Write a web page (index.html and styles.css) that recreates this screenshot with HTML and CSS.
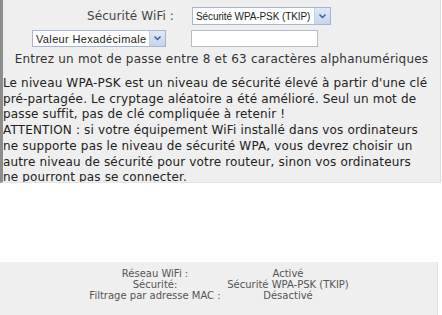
FILE: index.html
```html
<!DOCTYPE html>
<html lang="fr">
<head>
<meta charset="utf-8">
<link rel="stylesheet" href="styles.css">
</head>
<body>
<div class="panel">
  <div class="row row1">
    <span class="label">Sécurité WiFi :</span>
    <div class="select sel-sec">
      <span class="sel-text">Sécurité WPA-PSK (TKIP)</span>
      <span class="arrow"><svg width="7" height="5" viewBox="0 0 7 5"><path d="M0.5 0.5 L3.5 3.5 L6.5 0.5" fill="none" stroke="#3a5a9a" stroke-width="1.4"/></svg></span>
    </div>
  </div>
  <div class="row row2">
    <div class="select sel-hex">
      <span class="sel-text">Valeur Hexadécimale</span>
      <span class="arrow"><svg width="7" height="5" viewBox="0 0 7 5"><path d="M0.5 0.5 L3.5 3.5 L6.5 0.5" fill="none" stroke="#3a5a9a" stroke-width="1.4"/></svg></span>
    </div>
    <div class="input"></div>
  </div>
  <p class="hint">Entrez un mot de passe entre 8 et 63 caractères alphanumériques</p>
  <p class="desc">Le niveau WPA-PSK est un niveau de sécurité élevé à partir d'une clé<br>pré-partagée. Le cryptage aléatoire a été amélioré. Seul un mot de<br>passe suffit, pas de clé compliquée à retenir !<br>ATTENTION : si votre équipement WiFi installé dans vos ordinateurs<br>ne supporte pas le niveau de sécurité WPA, vous devrez choisir un<br>autre niveau de sécurité pour votre routeur, sinon vos ordinateurs<br>ne pourront pas se connecter.</p>
</div>
<div class="status">
  <table class="stat-table">
    <tr><td class="k">Réseau WiFi :</td><td class="v">Activé</td></tr>
    <tr><td class="k">Sécurité:</td><td class="v">Sécurité WPA-PSK (TKIP)</td></tr>
    <tr><td class="k">Filtrage par adresse MAC :</td><td class="v">Désactivé</td></tr>
  </table>
</div>
</body>
</html>
```
FILE: styles.css
```css
html, body { margin: 0; padding: 0; background: #fff; }
body { font-family: "DejaVu Sans", Verdana, sans-serif; color: #222; }

.panel {
  box-sizing: border-box;
  width: 441px;
  height: 183px;
  overflow: hidden;
  background: #efefef;
  border-left: 3px solid #8c8c8c;
  border-right: 1px solid #dcdcdc;
  border-bottom: 1px solid #e4e4e4;
}

.row { display: flex; align-items: center; }
.row1 { padding-top: 7px; height: 18px; }
.row1 .label {
  width: 171px;
  text-align: right;
  font-size: 12px;
  letter-spacing: 0.1px;
  color: #444;
  margin-right: 18px;
}
.row2 { padding-top: 5px; height: 17px; }

.select {
  box-sizing: border-box;
  display: flex;
  align-items: center;
  background: #fff;
  border: 1px solid #a7b6cf;
  font-family: "Liberation Sans", Arial, sans-serif;
  color: #222;
}
.sel-sec { width: 139px; height: 18px; font-size: 10px; letter-spacing: -0.1px; }
.sel-hex { width: 134px; height: 17px; font-size: 11px; margin-left: 29px; letter-spacing: 0.35px; }
.sel-text { flex: 1; padding-left: 3px; white-space: nowrap; overflow: hidden; }
.arrow {
  box-sizing: border-box;
  width: 16px;
  height: 100%;
  flex: none;
  display: flex;
  align-items: center;
  justify-content: center;
  background: linear-gradient(#dfe8f7, #c5d4ee);
  border-left: 1px solid #c3d0e6;
}
.input {
  box-sizing: border-box;
  width: 127px;
  height: 17px;
  margin-left: 25px;
  background: #fff;
  border: 1px solid #b5bcc8;
}

.hint {
  margin: 5px 0 0;
  text-align: center;
  font-size: 12px;
  letter-spacing: 0.22px;
  color: #333;
  line-height: 15px;
  white-space: nowrap;
}
.desc {
  margin: 9px 0 0;
  font-size: 12px;
  letter-spacing: 0.15px;
  line-height: 15.7px;
  color: #222;
  white-space: nowrap;
}

.status {
  box-sizing: border-box;
  width: 438px;
  height: 53px;
  margin-top: 79px;
  background: #efefef;
  border-right: 1px solid #e2e2e2;
  padding: 6px 0 0 85px;
}
.stat-table {
  border-collapse: collapse;
  font-size: 10px;
  color: #555;
}
.stat-table td { padding: 0; line-height: 11px; text-align: center; white-space: nowrap; }
.stat-table .k { width: 140px; }
.stat-table .v { width: 126px; }
```
